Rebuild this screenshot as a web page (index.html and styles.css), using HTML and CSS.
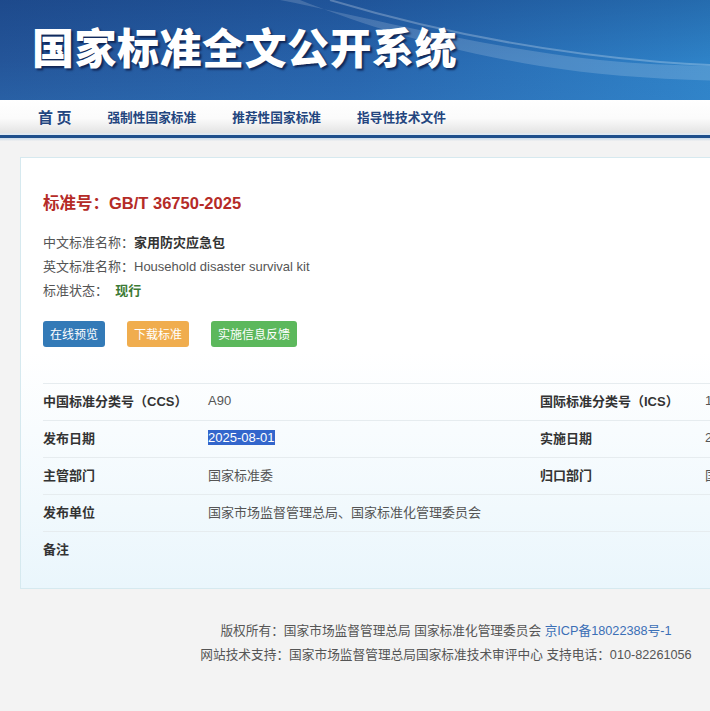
FILE: index.html
```html
<!DOCTYPE html>
<html lang="zh-CN">
  <head>
    <meta charset="UTF-8" />
    <meta name="viewport" content="width=device-width, initial-scale=1.0" />
    <title>国家标准全文公开系统</title>
    <link rel="stylesheet" href="styles.css">
  </head>
  <body>
    <div class="page">
      <div class="banner">
        <svg class="wave" width="892" height="100" viewBox="0 0 892 100">
          <path d="M280 0 C 380 20, 470 45, 600 60 C 700 70, 800 66, 892 60 L 892 100 L 892 75 C 780 86, 640 82, 540 66 C 430 48, 350 20, 300 0 Z" fill="#ffffff" fill-opacity="0.16" />
          <path d="M330 0 C 430 30, 540 52, 660 62 C 760 70, 840 64, 892 56" stroke="#ffffff" stroke-opacity="0.25" stroke-width="2" fill="none" />
        </svg>
        <h1 class="site-title">国家标准全文公开系统</h1>
      </div>
      <div class="nav">
        <a href="#" class="home">首 页</a>
        <a href="#">强制性国家标准</a>
        <a href="#">推荐性国家标准</a>
        <a href="#">指导性技术文件</a>
      </div>
      <div class="main">
        <div class="card">
          <h2 class="std-no">标准号：GB/T 36750-2025</h2>
          <div class="info">
            <p>中文标准名称：<b>家用防灾应急包</b></p>
            <p>英文标准名称：Household disaster survival kit</p>
            <p>标准状态：&nbsp; <b class="status">现行</b></p>
          </div>
          <div class="actions">
            <button class="btn btn-blue">在线预览</button>
            <button class="btn btn-orange">下载标准</button>
            <button class="btn btn-green">实施信息反馈</button>
          </div>
          <table class="details">
            <tr>
              <th>中国标准分类号（CCS）</th>
              <td>A90</td>
              <th>国际标准分类号（ICS）</th>
              <td>13.200</td>
            </tr>
            <tr>
              <th>发布日期</th>
              <td><span class="selected">2025-08-01</span></td>
              <th>实施日期</th>
              <td>2026-03-01</td>
            </tr>
            <tr>
              <th>主管部门</th>
              <td>国家标准委</td>
              <th>归口部门</th>
              <td>国家标准委</td>
            </tr>
            <tr>
              <th>发布单位</th>
              <td colspan="3">国家市场监督管理总局、国家标准化管理委员会</td>
            </tr>
            <tr>
              <th>备注</th>
              <td colspan="3"></td>
            </tr>
          </table>
        </div>
        <div class="footer">
          <p>版权所有：国家市场监督管理总局 国家标准化管理委员会 <a href="#">京ICP备18022388号-1</a></p>
          <p>网站技术支持：国家市场监督管理总局国家标准技术审评中心 支持电话：010-82261056</p>
        </div>
      </div>
    </div>
  </body>
</html>
```

FILE: styles.css
```css
* {
  padding: 0;
  margin: 0;
  border: 0;
  box-sizing: border-box;
}
html,
body {
  height: 100%;
  overflow: hidden;
  background-color: #f3f3f3;
}
body {
  font-family: "Liberation Sans", "Noto Sans CJK SC", sans-serif;
  font-size: 13px;
  color: #555;
}
a {
  text-decoration: none;
}
button {
  font-family: inherit;
  cursor: pointer;
}

.page {
  width: 892px;
}

/* -------------- banner */
.banner {
  position: relative;
  height: 100px;
  overflow: hidden;
  background: linear-gradient(to right, #245599 0%, #2763ab 40%, #2d7ec4 75%, #3496d6 100%);
}
.banner::before {
  content: "";
  position: absolute;
  inset: 0;
  background: linear-gradient(to bottom, rgba(10, 40, 100, 0.25), rgba(10, 40, 100, 0) 60%, rgba(60, 140, 210, 0.2));
}
.wave {
  position: absolute;
  top: 0;
  left: 0;
}
.site-title {
  position: relative;
  padding: 22px 0 0 32px;
  font-family: "Noto Sans CJK SC", sans-serif;
  font-size: 42px;
  font-weight: 900;
  line-height: 48px;
  letter-spacing: 0.5px;
  color: #fff;
  text-shadow: 2px 2px 2px rgba(10, 20, 60, 0.75);
}

/* -------------- nav */
.nav {
  height: 41px;
  display: flex;
  align-items: center;
  gap: 36px;
  padding: 0 0 8px 38px;
  background:
    linear-gradient(to bottom, #fff 0%, #fbfbfb 45%, #e4e4e4 80%, #dfe9f2 82%, #dfe9f2 85%, #1f4f8c 85%, #1f4f8c 92%, #c7d9ea 92%, #f0f0f0 100%);
  font-family: "Noto Sans CJK SC", sans-serif;
}
.nav a {
  font-size: 12.7px;
  font-weight: bold;
  color: #23457e;
}
.nav a.home {
  font-size: 15px;
}

/* -------------- card */
.main {
  padding-top: 16px;
}
.card {
  margin: 0 20px;
  border: 1px solid #d6e9ef;
  background: linear-gradient(to bottom, #fff 0%, #fff 45%, #eaf6fc 100%);
  padding: 33px 22px 19px;
}
.std-no {
  font-size: 16.5px;
  line-height: 24px;
  font-weight: bold;
  color: #b52b27;
}
.info {
  margin-top: 16px;
}
.info p {
  line-height: 24px;
}
.info b {
  color: #333;
}
.info .status {
  color: #3c7a35;
}
.actions {
  display: flex;
  gap: 22px;
  margin-top: 18px;
}
.btn {
  height: 26px;
  padding: 0 7px 2px;
  border-radius: 3px;
  font-size: 12px;
  color: #fff;
}
.btn-blue {
  background-color: #337ab7;
}
.btn-orange {
  background-color: #f0ad4e;
}
.btn-green {
  background-color: #5cb85c;
}

.details {
  width: 100%;
  margin-top: 36px;
  border-collapse: collapse;
}
.details tr {
  border-top: 1px solid #e6ecef;
}
.details th,
.details td {
  height: 37px;
  padding-bottom: 3px;
  text-align: left;
  vertical-align: middle;
  font-size: 13px;
}
.details th {
  width: 165px;
  font-weight: bold;
  color: #333;
}
.details td {
  color: #555;
}
.details td:nth-child(2) {
  width: 332px;
}
.selected {
  background-color: #3366cc;
  color: #fff;
}

/* -------------- footer */
.footer {
  padding-top: 30px;
  text-align: center;
  font-size: 12.7px;
}
.footer p {
  line-height: 24px;
}
.footer a {
  color: #3b6fb6;
}
```
